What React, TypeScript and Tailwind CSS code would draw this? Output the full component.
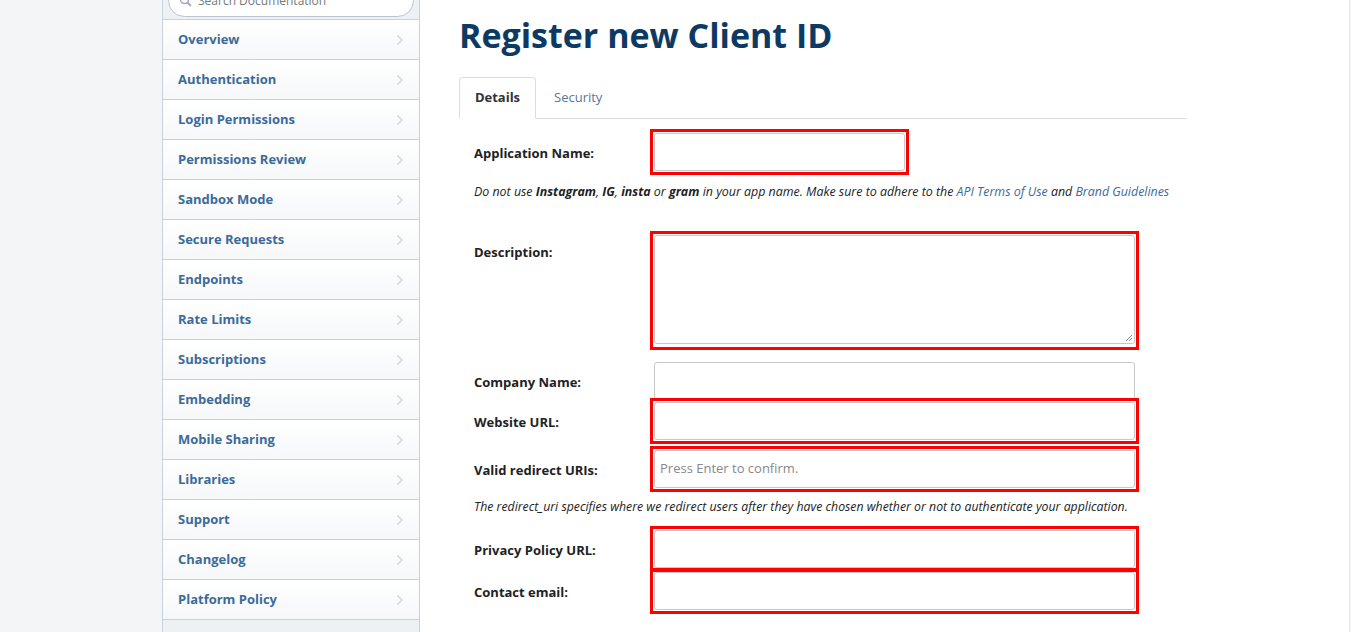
import React from "react";

const navItems = [
  "Overview",
  "Authentication",
  "Login Permissions",
  "Permissions Review",
  "Sandbox Mode",
  "Secure Requests",
  "Endpoints",
  "Rate Limits",
  "Subscriptions",
  "Embedding",
  "Mobile Sharing",
  "Libraries",
  "Support",
  "Changelog",
  "Platform Policy",
];

function Chevron() {
  return (
    <svg width="8" height="12" viewBox="0 0 8 12" className="shrink-0">
      <path d="M1.5 1.5 L6 6 L1.5 10.5" fill="none" stroke="#d3d6da" strokeWidth="1.4" />
    </svg>
  );
}

function Red({ children, className = "" }: { children: React.ReactNode; className?: string }) {
  return (
    <div className={"border-[3px] border-[#ff0000] p-px " + className}>{children}</div>
  );
}

function Input({ placeholder, w = "w-[481px]" }: { placeholder?: string; w?: string }) {
  return (
    <div
      className={
        "h-[38px] border border-[#c9c9c9] rounded-[3px] bg-white flex items-center px-[5px] text-[13px] text-[#888] " + w
      }
    >
      {placeholder}
    </div>
  );
}

function Label({ children }: { children: React.ReactNode }) {
  return (
    <div className="w-[195px] pl-[15px] pt-[3px] text-[13px] font-bold text-[#222] shrink-0">{children}</div>
  );
}

export default function App() {
  return (
    <div
      className="w-[1351px] h-[632px] overflow-hidden flex bg-[#f4f5f6]"
      style={{ fontFamily: '"Open Sans", "Liberation Sans", sans-serif' }}
    >
      {/* left gutter */}
      <div className="w-[162px] shrink-0 bg-[#f4f5f6]" />

      {/* sidebar */}
      <div className="w-[258px] shrink-0 flex flex-col border-l border-r border-[#c9d2dc] bg-[#eef1f4]">
        <div className="h-[20px] shrink-0 overflow-hidden px-[5px] border-b border-[#c9d2dc]">
          <div className="-mt-[16px] h-[33px] rounded-full border border-[#b9c4cf] bg-white flex items-center pl-[10px] gap-[6px] text-[12px] text-[#777]">
            <svg width="13" height="13" viewBox="0 0 13 13">
              <circle cx="5.5" cy="5.5" r="4" fill="none" stroke="#aab" strokeWidth="1.6" />
              <path d="M8.5 8.5 L12 12" stroke="#aab" strokeWidth="1.8" />
            </svg>
            <span>Search Documentation</span>
          </div>
        </div>
        {navItems.map((n) => (
          <div
            key={n}
            className="h-[40px] shrink-0 flex items-center justify-between pl-[15px] pr-[15px] border-b border-[#c9d2dc] bg-gradient-to-b from-white to-[#f6f7f9]"
          >
            <span className="text-[13px] font-bold text-[#3b6b99]">{n}</span>
            <Chevron />
          </div>
        ))}
        <div className="flex-1 bg-[#eef1f4]" />
      </div>

      {/* main */}
      <div className="flex-1 bg-white pl-[39px]">
        <h1 className="mt-[15px] leading-[40px] text-[34px] font-bold text-[#0d3a62]">
          Register new Client ID
        </h1>

        <div className="mt-[22px] w-[728px] flex border-b border-[#dddddd] h-[42px]">
          <div className="w-[77px] h-[42px] border border-[#dddddd] border-b-white rounded-t-[4px] bg-white flex items-center justify-center text-[13px] font-bold text-[#333] -mb-px">
            Details
          </div>
          <div className="h-[41px] flex items-center pl-[18px] text-[13px] text-[#56789a]">Security</div>
        </div>

        {/* Application name */}
        <div className="mt-[10px] flex items-center h-[46px]">
          <Label>Application Name:</Label>
          <Red className="-ml-[4px]">
            <Input w="w-[251px]" />
          </Red>
        </div>
        <div className="mt-[8px] pl-[15px] h-[18px] leading-[18px] text-[12.4px] italic text-[#222]">
          Do not use <b>Instagram</b>, <b>IG</b>, <b>insta</b> or <b>gram</b> in your app name. Make sure to adhere to the{" "}
          <span className="text-[#3b6b99]">API Terms of Use</span> and <span className="text-[#3b6b99]">Brand Guidelines</span>
        </div>

        {/* Description */}
        <div className="mt-[30px] flex items-start h-[119px]">
          <div className="pt-[9px]">
            <Label>Description:</Label>
          </div>
          <Red className="-ml-[4px] h-[119px]">
            <div className="relative h-[109px] w-[481px] border border-[#c9c9c9] rounded-[3px] bg-white">
              <svg width="8" height="8" viewBox="0 0 8 8" className="absolute right-[1px] bottom-[1px]">
                <path d="M7 1 L1 7 M7 4 L4 7" stroke="#888" strokeWidth="1" />
              </svg>
            </div>
          </Red>
        </div>

        {/* Company */}
        <div className="mt-[12px] flex items-center h-[38px]">
          <Label>Company Name:</Label>
          <Input />
        </div>

        {/* Website */}
        <div className="-mt-[2px] flex items-center h-[46px]">
          <Label>Website URL:</Label>
          <Red className="-ml-[4px]">
            <Input />
          </Red>
        </div>

        {/* Redirect */}
        <div className="mt-[2px] flex items-center h-[46px]">
          <Label>Valid redirect URIs:</Label>
          <Red className="-ml-[4px]">
            <Input placeholder="Press Enter to confirm." />
          </Red>
        </div>
        <div className="mt-[6px] pl-[15px] h-[18px] leading-[18px] text-[12.3px] italic text-[#222]">
          The redirect_uri specifies where we redirect users after they have chosen whether or not to authenticate your application.
        </div>

        {/* Privacy */}
        <div className="mt-[10px] flex items-center h-[46px]">
          <Label>Privacy Policy URL:</Label>
          <Red className="-ml-[4px]">
            <Input />
          </Red>
        </div>

        {/* Contact */}
        <div className="-mt-[4px] flex items-center h-[46px]">
          <Label>Contact email:</Label>
          <Red className="-ml-[4px]">
            <Input />
          </Red>
        </div>
      </div>

      <div className="w-[2px] shrink-0 bg-[#eeeeee]" />
    </div>
  );
}
